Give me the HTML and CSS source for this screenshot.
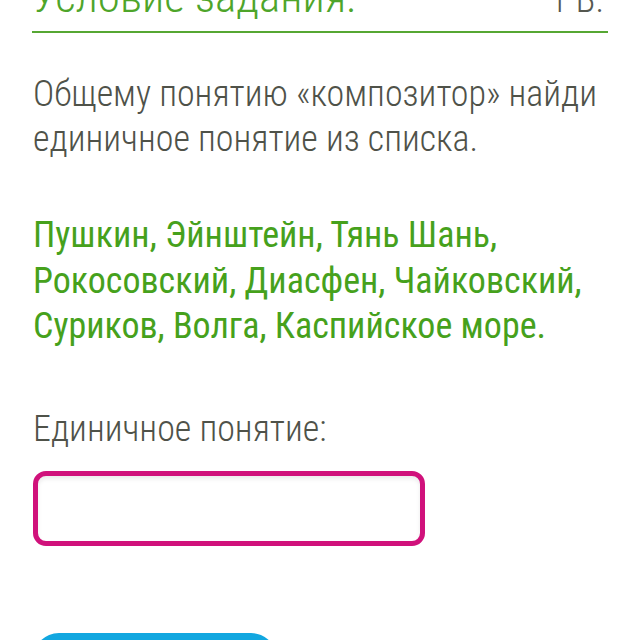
FILE: index.html
```html
<!DOCTYPE html>
<html lang="ru">
<head>
<meta charset="utf-8">
<link rel="stylesheet" href="styles.css">
</head>
<body>
<main class="task">
  <header class="task-head">
    <span class="task-title">Условие задания:</span>
    <span class="task-score">1 Б.</span>
  </header>
  <p class="task-text">Общему понятию «композитор» найди единичное понятие из списка.</p>
  <p class="task-list">Пушкин, Эйнштейн, Тянь Шань, Рокосовский, Диасфен, Чайковский, Суриков, Волга, Каспийское море.</p>
  <label class="answer-label" for="answer">Единичное понятие:</label>
  <input class="answer-input" id="answer" type="text">
  <button class="submit-btn" type="button">Ответить!</button>
</main>
</body>
</html>
```
FILE: styles.css
```css
html, body {
  margin: 0;
  padding: 0;
  background: #fff;
  overflow: hidden;
}
.task {
  padding: 0 32px;
  margin-top: -27px;
  display: flex;
  flex-direction: column;
  align-items: flex-start;
  font-family: "Roboto Condensed", Roboto, sans-serif;
  font-stretch: condensed;
  font-size: 36px;
}
.task-head {
  align-self: stretch;
  display: flex;
  justify-content: space-between;
  align-items: baseline;
  line-height: 48px;
  padding-bottom: 7px;
  border-bottom: 2px solid #56a733;
}
.task-title {
  color: #4ea52a;
  font-weight: 300;
  font-size: 45px;
}
.task-score {
  color: #555850;
  font-weight: 300;
  margin-right: 4px;
}
.task-text {
  margin: 39px 0 0;
  line-height: 45px;
  color: #4f5249;
  font-weight: 300;
  padding-left: 1px;
}
.task-list {
  margin: 51px 0 0;
  line-height: 45.5px;
  color: #46a11c;
  font-weight: 400;
  padding-left: 1px;
}
.answer-label {
  margin-top: 57px;
  line-height: 45px;
  color: #4f5249;
  font-weight: 300;
  padding-left: 1px;
}
.answer-input {
  margin-top: 19px;
  box-sizing: border-box;
  width: 392px;
  height: 75px;
  border: 5px solid #d0117b;
  border-radius: 13px;
  box-shadow: inset 0 3px 4px rgba(0, 0, 0, 0.08);
  background: #fff;
  font: inherit;
  outline: none;
  padding: 0 14px;
  margin-left: 1px;
}
.submit-btn {
  margin-top: 87px;
  margin-left: 1px;
  width: 244px;
  height: 70px;
  border: none;
  border-radius: 26px;
  background: #12a7e0;
  color: #fff;
  font: inherit;
}
```
